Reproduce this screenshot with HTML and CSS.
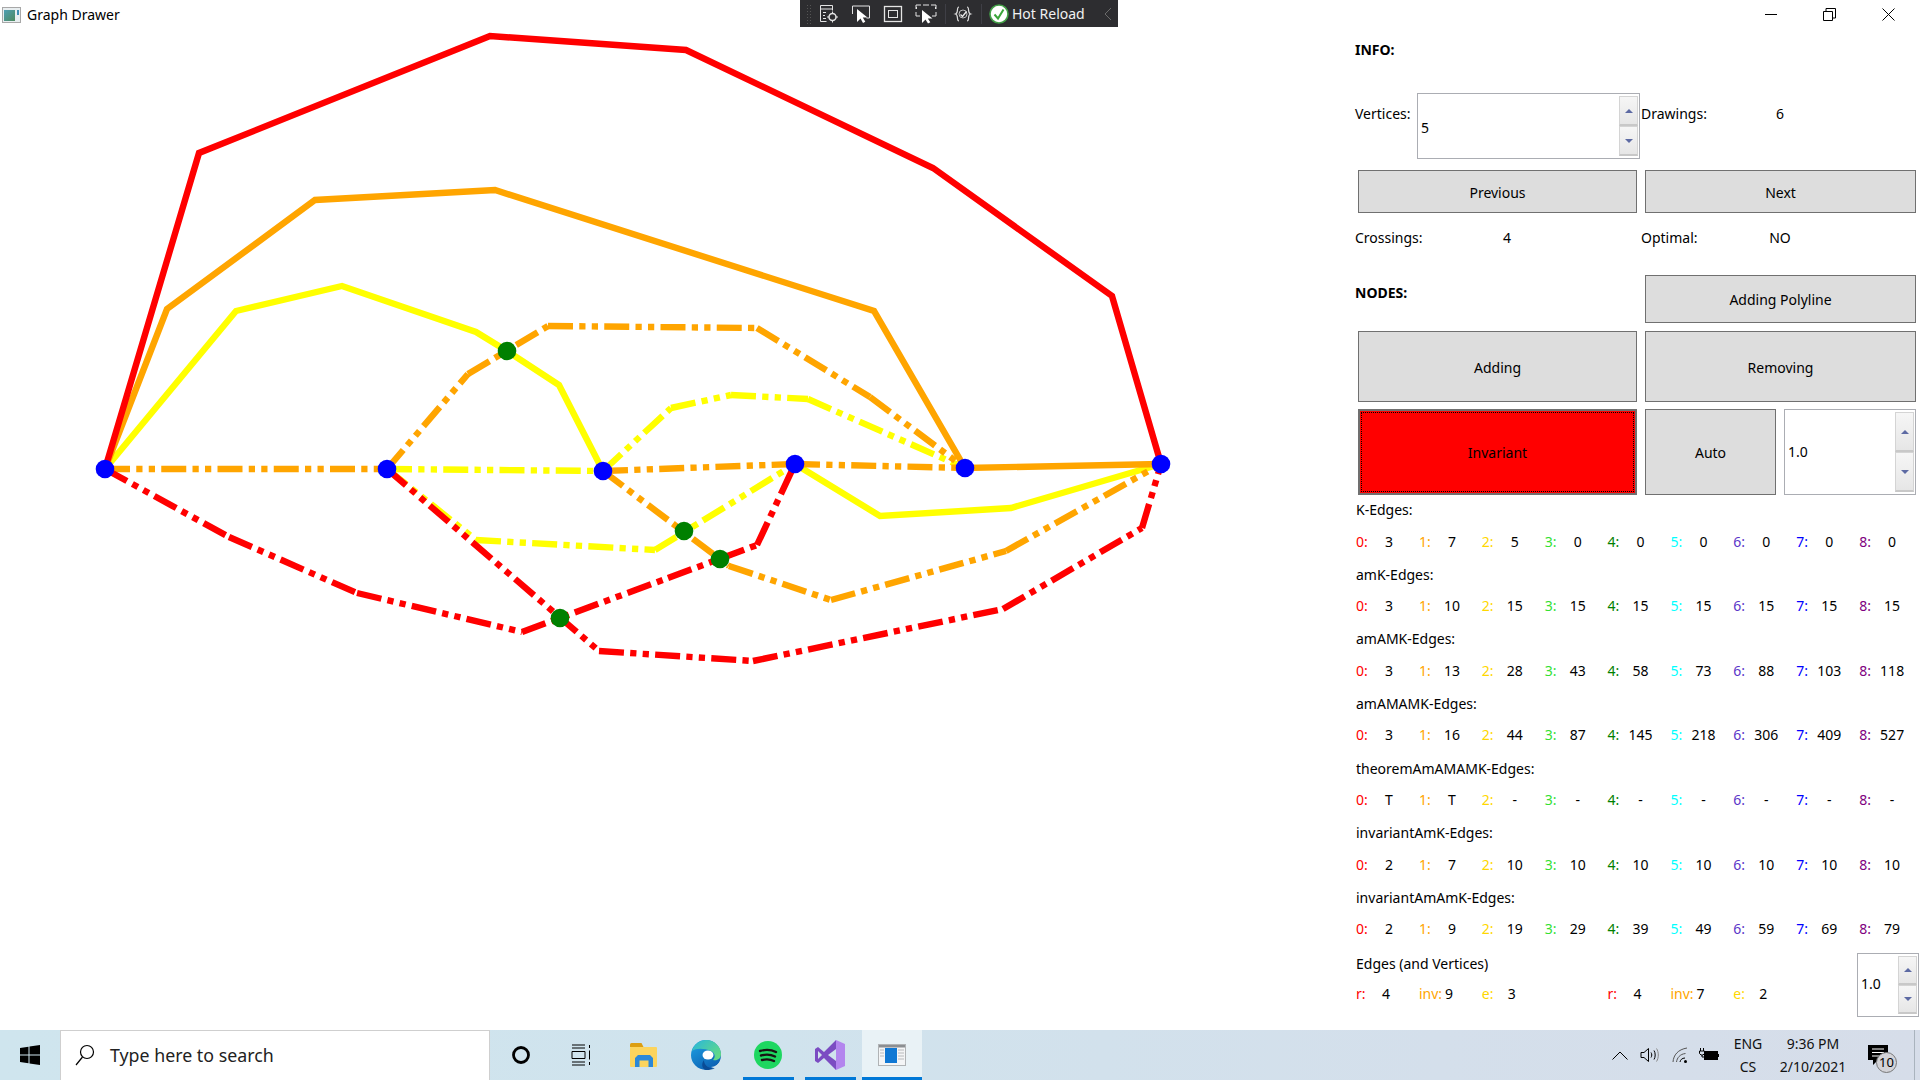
FILE: index.html
```html
<!DOCTYPE html>
<html lang="en">
  <head>
    <meta charset="UTF-8" />
    <title>Graph Drawer</title>
    <link rel="stylesheet" href="styles.css">
  </head>
  <body>
    <div class="window">
      <div class="titlebar">
        <div class="title">
          <svg class="app-icon" width="20" height="16" viewBox="0 0 20 16">
            <defs>
              <linearGradient id="appFill" x1="0" y1="0" x2="1" y2="1">
                <stop offset="0" stop-color="#4f9fb5" />
                <stop offset="1" stop-color="#4d8a5e" />
              </linearGradient>
            </defs>
            <rect x="0.5" y="0.5" width="18" height="15" fill="#e8eef0" stroke="#a8a8a8" />
            <rect x="2" y="3" width="11" height="11" fill="url(#appFill)" />
            <rect x="15" y="3" width="2" height="5" fill="#3f8fb5" />
          </svg>
          <span>Graph Drawer</span>
        </div>
        <div class="window-controls">
          <svg width="12" height="12" viewBox="0 0 12 12"><path d="M0 6.5h12" stroke="#000" fill="none" /></svg>
          <svg width="13" height="13" viewBox="0 0 13 13"><path d="M0.5 3.5h9v9h-9zM3 3.5v-3h9.5v9.500h-3" stroke="#000" fill="none" /></svg>
          <svg width="13" height="13" viewBox="0 0 13 13"><path d="M0.500 0.500l12 12M12.500 0.500l-12 12" stroke="#000" fill="none" /></svg>
        </div>
      </div>

      <!-- runtime toolbar that VS lays over the running app -->
      <div class="hot-toolbar">
        <span class="grip"></span>
        <svg class="tool tool-first" width="20" height="20" viewBox="0 0 20 20">
          <path d="M1.500 1.500h12v5M1.500 1.500v16h6M1.500 5h12M4 8.500h3M4 11.500h2M4 14.500h3" stroke="#e4e4e4" fill="none" />
          <circle cx="13.500" cy="13" r="3.500" stroke="#e4e4e4" stroke-width="1.500" fill="none" />
          <path d="M13.500 7.500v2M13.500 16.500v2M8 13h2M17 13h2" stroke="#e4e4e4" />
        </svg>
        <svg class="tool" width="20" height="20" viewBox="0 0 20 20">
          <path d="M1.500 10v-8h17v12h-3" stroke="#e4e4e4" fill="none" />
          <path d="M6 5v13l3.500-3.500 2.500 4.500 2.300-1.200-2.500-4.300h4.700z" fill="#fff" />
        </svg>
        <svg class="tool" width="20" height="20" viewBox="0 0 20 20">
          <rect x="1.500" y="2.500" width="17" height="15" stroke="#e4e4e4" fill="none" stroke-width="1.300" />
          <rect x="5.500" y="6.500" width="9" height="7" stroke="#e4e4e4" fill="none" />
        </svg>
        <svg class="tool" width="22" height="20" viewBox="0 0 22 20">
          <path d="M1 5v-4h5M16 1h5v4M1 8v4h4M21 8v4h-4M8 1h6M1.500 3v2M20.500 3v2" stroke="#e4e4e4" fill="none" />
          <path d="M7 6v13l3.500-3.500 2.500 4 2.300-1.200-2.500-3.800h4.700z" fill="#fff" />
        </svg>
        <span class="tool-sep"></span>
        <svg class="tool" width="20" height="20" viewBox="0 0 20 20">
          <path d="M6 3c-3 0 0 6-3.500 7 3.500 1 0.500 7 3.500 7M14 3c3 0 0 6 3.500 7-3.500 1-0.500 7-3.500 7" stroke="#dcdcdc" fill="none" stroke-width="1.200" />
          <circle cx="10" cy="10" r="4" stroke="#bbb" fill="none" />
          <path d="M7.500 10.500l2 2 4-5" stroke="#e8e8e8" fill="none" stroke-width="1.400" />
        </svg>
        <span class="tool-sep"></span>
        <svg class="reload-check" width="20" height="20" viewBox="0 0 20 20">
          <circle cx="10" cy="10" r="9" fill="#fff" stroke="#43a047" stroke-width="1.600" />
          <path d="M5.500 10.500l3.500 4 5.500-9" stroke="#3aa53a" stroke-width="2" fill="none" />
        </svg>
        <span class="reload-text">Hot Reload</span>
        <svg class="collapse" width="8" height="14" viewBox="0 0 8 14"><path d="M7 1l-6 6 6 6" stroke="#6b6b6b" fill="none" /></svg>
      </div>

      <div class="content">
        <svg class="canvas" width="1340" height="1000" viewBox="0 30 1340 1000">
          <g class="edges yellow">
            <polyline points="105,469 236,311 342,286 476,332 507,351 559,385 603,471" />
            <polyline points="795,464 880,516 1011,508 1161,464" />
            <line class="dashed" x1="387" y1="469" x2="603" y2="471" />
            <line class="dashed" x1="603" y1="471" x2="671" y2="408" />
            <line class="dashed" x1="671" y1="408" x2="731" y2="395" />
            <line class="dashed" x1="731" y1="395" x2="808" y2="399" />
            <line class="dashed" x1="808" y1="399" x2="965" y2="468" />
            <line class="dashed" x1="387" y1="469" x2="476" y2="540" />
            <line class="dashed" x1="476" y1="540" x2="655" y2="550" />
            <line class="dashed" x1="655" y1="550" x2="795" y2="464" />
          </g>
          <g class="edges orange">
            <polyline points="105,469 167,309 315,200 495,190 874,311 965,468 1161,464" />
            <line class="dashed" x1="105" y1="469" x2="387" y2="469" />
            <line class="dashed" x1="603" y1="471" x2="795" y2="464" />
            <line class="dashed" x1="795" y1="464" x2="965" y2="468" />
            <line class="dashed" x1="387" y1="469" x2="468" y2="374" />
            <line class="dashed" x1="468" y1="374" x2="548" y2="326" />
            <line class="dashed" x1="548" y1="326" x2="757" y2="328" />
            <line class="dashed" x1="757" y1="328" x2="870" y2="397" />
            <line class="dashed" x1="870" y1="397" x2="965" y2="468" />
            <line class="dashed" x1="603" y1="471" x2="729" y2="566" />
            <line class="dashed" x1="729" y1="566" x2="831" y2="600" />
            <line class="dashed" x1="831" y1="600" x2="1006" y2="551" />
            <line class="dashed" x1="1006" y1="551" x2="1161" y2="464" />
          </g>
          <g class="edges red">
            <polyline points="105,469 199,153 490,36 686,50 933,168 1112,296 1161,464" />
            <line class="dashed" x1="105" y1="469" x2="229" y2="537" />
            <line class="dashed" x1="229" y1="537" x2="357" y2="593" />
            <line class="dashed" x1="357" y1="593" x2="522" y2="632" />
            <line class="dashed" x1="522" y1="632" x2="668" y2="578" />
            <line class="dashed" x1="668" y1="578" x2="757" y2="545" />
            <line class="dashed" x1="757" y1="545" x2="795" y2="464" />
            <line class="dashed" x1="387" y1="469" x2="599" y2="651" />
            <line class="dashed" x1="599" y1="651" x2="753" y2="661" />
            <line class="dashed" x1="753" y1="661" x2="1003" y2="609" />
            <line class="dashed" x1="1003" y1="609" x2="1142" y2="528" />
            <line class="dashed" x1="1142" y1="528" x2="1161" y2="464" />
          </g>
          <g fill="#008000">
            <circle cx="507" cy="351" r="9.300" />
            <circle cx="684" cy="531" r="9.300" />
            <circle cx="720" cy="559" r="9.300" />
            <circle cx="560" cy="618" r="9.300" />
          </g>
          <g fill="#0000ff">
            <circle cx="105" cy="469" r="9.300" />
            <circle cx="387" cy="469" r="9.300" />
            <circle cx="603" cy="471" r="9.300" />
            <circle cx="795" cy="464" r="9.300" />
            <circle cx="965" cy="468" r="9.300" />
            <circle cx="1161" cy="464" r="9.300" />
          </g>
        </svg>

        <div class="panel">
          <div class="heading info-heading">INFO:</div>

          <div class="vertices-row">
            <span class="vertices-label">Vertices:</span>
            <div class="spinner vertices-spinner">
              <span class="spinner-value">5</span>
              <div class="spin-buttons">
                <span class="spin-btn"><i class="arrow-up"></i></span>
                <span class="spin-btn"><i class="arrow-down"></i></span>
              </div>
            </div>
            <span class="drawings-label">Drawings:</span>
            <span class="stat-value">6</span>
          </div>

          <div class="button-row prev-row">
            <button class="btn">Previous</button>
            <button class="btn">Next</button>
          </div>

          <div class="stats-row">
            <span class="crossings-label">Crossings:</span>
            <span class="stat-value">4</span>
            <span class="optimal-label">Optimal:</span>
            <span class="stat-value">NO</span>
          </div>

          <div class="button-row nodes-row">
            <div class="heading nodes-heading">NODES:</div>
            <button class="btn">Adding Polyline</button>
          </div>

          <div class="button-row mode-row">
            <button class="btn">Adding</button>
            <button class="btn">Removing</button>
          </div>

          <div class="button-row invariant-row">
            <button class="btn btn-active"><span class="focus-ring">Invariant</span></button>
            <div class="auto-group">
              <button class="btn">Auto</button>
              <div class="spinner">
                <span class="spinner-value">1.0</span>
                <div class="spin-buttons">
                  <span class="spin-btn"><i class="arrow-up"></i></span>
                  <span class="spin-btn"><i class="arrow-down"></i></span>
                </div>
              </div>
            </div>
          </div>

          <div class="group">
            <div class="group-label">K-Edges:</div>
            <div class="counts">
              <div class="cell"><span class="key c0">0:</span><span class="val">3</span></div>
              <div class="cell"><span class="key c1">1:</span><span class="val">7</span></div>
              <div class="cell"><span class="key c2">2:</span><span class="val">5</span></div>
              <div class="cell"><span class="key c3">3:</span><span class="val">0</span></div>
              <div class="cell"><span class="key c4">4:</span><span class="val">0</span></div>
              <div class="cell"><span class="key c5">5:</span><span class="val">0</span></div>
              <div class="cell"><span class="key c6">6:</span><span class="val">0</span></div>
              <div class="cell"><span class="key c7">7:</span><span class="val">0</span></div>
              <div class="cell"><span class="key c8">8:</span><span class="val">0</span></div>
            </div>
          </div>
          <div class="group">
            <div class="group-label">amK-Edges:</div>
            <div class="counts">
              <div class="cell"><span class="key c0">0:</span><span class="val">3</span></div>
              <div class="cell"><span class="key c1">1:</span><span class="val">10</span></div>
              <div class="cell"><span class="key c2">2:</span><span class="val">15</span></div>
              <div class="cell"><span class="key c3">3:</span><span class="val">15</span></div>
              <div class="cell"><span class="key c4">4:</span><span class="val">15</span></div>
              <div class="cell"><span class="key c5">5:</span><span class="val">15</span></div>
              <div class="cell"><span class="key c6">6:</span><span class="val">15</span></div>
              <div class="cell"><span class="key c7">7:</span><span class="val">15</span></div>
              <div class="cell"><span class="key c8">8:</span><span class="val">15</span></div>
            </div>
          </div>
          <div class="group">
            <div class="group-label">amAMK-Edges:</div>
            <div class="counts">
              <div class="cell"><span class="key c0">0:</span><span class="val">3</span></div>
              <div class="cell"><span class="key c1">1:</span><span class="val">13</span></div>
              <div class="cell"><span class="key c2">2:</span><span class="val">28</span></div>
              <div class="cell"><span class="key c3">3:</span><span class="val">43</span></div>
              <div class="cell"><span class="key c4">4:</span><span class="val">58</span></div>
              <div class="cell"><span class="key c5">5:</span><span class="val">73</span></div>
              <div class="cell"><span class="key c6">6:</span><span class="val">88</span></div>
              <div class="cell"><span class="key c7">7:</span><span class="val">103</span></div>
              <div class="cell"><span class="key c8">8:</span><span class="val">118</span></div>
            </div>
          </div>
          <div class="group">
            <div class="group-label">amAMAMK-Edges:</div>
            <div class="counts">
              <div class="cell"><span class="key c0">0:</span><span class="val">3</span></div>
              <div class="cell"><span class="key c1">1:</span><span class="val">16</span></div>
              <div class="cell"><span class="key c2">2:</span><span class="val">44</span></div>
              <div class="cell"><span class="key c3">3:</span><span class="val">87</span></div>
              <div class="cell"><span class="key c4">4:</span><span class="val">145</span></div>
              <div class="cell"><span class="key c5">5:</span><span class="val">218</span></div>
              <div class="cell"><span class="key c6">6:</span><span class="val">306</span></div>
              <div class="cell"><span class="key c7">7:</span><span class="val">409</span></div>
              <div class="cell"><span class="key c8">8:</span><span class="val">527</span></div>
            </div>
          </div>
          <div class="group">
            <div class="group-label">theoremAmAMAMK-Edges:</div>
            <div class="counts">
              <div class="cell"><span class="key c0">0:</span><span class="val">T</span></div>
              <div class="cell"><span class="key c1">1:</span><span class="val">T</span></div>
              <div class="cell"><span class="key c2">2:</span><span class="val">-</span></div>
              <div class="cell"><span class="key c3">3:</span><span class="val">-</span></div>
              <div class="cell"><span class="key c4">4:</span><span class="val">-</span></div>
              <div class="cell"><span class="key c5">5:</span><span class="val">-</span></div>
              <div class="cell"><span class="key c6">6:</span><span class="val">-</span></div>
              <div class="cell"><span class="key c7">7:</span><span class="val">-</span></div>
              <div class="cell"><span class="key c8">8:</span><span class="val">-</span></div>
            </div>
          </div>
          <div class="group">
            <div class="group-label">invariantAmK-Edges:</div>
            <div class="counts">
              <div class="cell"><span class="key c0">0:</span><span class="val">2</span></div>
              <div class="cell"><span class="key c1">1:</span><span class="val">7</span></div>
              <div class="cell"><span class="key c2">2:</span><span class="val">10</span></div>
              <div class="cell"><span class="key c3">3:</span><span class="val">10</span></div>
              <div class="cell"><span class="key c4">4:</span><span class="val">10</span></div>
              <div class="cell"><span class="key c5">5:</span><span class="val">10</span></div>
              <div class="cell"><span class="key c6">6:</span><span class="val">10</span></div>
              <div class="cell"><span class="key c7">7:</span><span class="val">10</span></div>
              <div class="cell"><span class="key c8">8:</span><span class="val">10</span></div>
            </div>
          </div>
          <div class="group">
            <div class="group-label">invariantAmAmK-Edges:</div>
            <div class="counts">
              <div class="cell"><span class="key c0">0:</span><span class="val">2</span></div>
              <div class="cell"><span class="key c1">1:</span><span class="val">9</span></div>
              <div class="cell"><span class="key c2">2:</span><span class="val">19</span></div>
              <div class="cell"><span class="key c3">3:</span><span class="val">29</span></div>
              <div class="cell"><span class="key c4">4:</span><span class="val">39</span></div>
              <div class="cell"><span class="key c5">5:</span><span class="val">49</span></div>
              <div class="cell"><span class="key c6">6:</span><span class="val">59</span></div>
              <div class="cell"><span class="key c7">7:</span><span class="val">69</span></div>
              <div class="cell"><span class="key c8">8:</span><span class="val">79</span></div>
            </div>
          </div>

          <div class="edges-section">
            <div class="edges-info">
              <div class="group-label">Edges (and Vertices)</div>
              <div class="counts edge-counts">
                <div class="cell"><span class="key c0">r:</span><span class="val">4</span></div>
                <div class="cell"><span class="key c1">inv:</span><span class="val">9</span></div>
                <div class="cell"><span class="key c2">e:</span><span class="val">3</span></div>
                <div class="cell cell-skip"><span class="key c0">r:</span><span class="val">4</span></div>
                <div class="cell"><span class="key c1">inv:</span><span class="val">7</span></div>
                <div class="cell"><span class="key c2">e:</span><span class="val">2</span></div>
              </div>
            </div>
            <div class="spinner small-spinner">
              <span class="spinner-value">1.0</span>
              <div class="spin-buttons">
                <span class="spin-btn"><i class="arrow-up"></i></span>
                <span class="spin-btn"><i class="arrow-down"></i></span>
              </div>
            </div>
          </div>
        </div>
      </div>
    </div>

    <div class="taskbar">
      <div class="start">
        <svg width="20" height="20" viewBox="0 0 20 20"><path d="M0 3l8.500-1.200v7.700H0zM9.500 1.600L20 0v9.500H9.500zM0 10.500h8.500v7.700L0 17zM9.500 10.500H20V20L9.500 18.400z" fill="#000" /></svg>
      </div>
      <div class="search">
        <svg width="20" height="22" viewBox="0 0 20 22"><circle cx="12" cy="8" r="6.500" fill="none" stroke="#000" stroke-width="1.200" /><path d="M7.500 13L1 21" stroke="#000" stroke-width="1.200" /></svg>
        <span>Type here to search</span>
      </div>
      <div class="task-items">
        <div class="task-item">
          <svg width="20" height="20" viewBox="0 0 20 20"><circle cx="10" cy="10" r="7.500" fill="none" stroke="#000" stroke-width="2.800" /></svg>
        </div>
        <div class="task-item task-view">
          <svg width="22" height="22" viewBox="0 0 22 22"><path d="M2 1h13M2 21h13M2 7.500h13v7H2zM2 4h13M2 18h13M19.500 1v3M19.500 6.500v9M19.500 18v3" stroke="#000" fill="none" /></svg>
        </div>
        <div class="task-item">
          <svg width="28" height="24" viewBox="0 0 28 24">
            <path d="M0 1.500q0-1.500 1.500-1.500h10l2 4H0z" fill="#dc9e12" />
            <rect x="0" y="4" width="27" height="20" rx="1" fill="#fcd45d" />
            <path d="M5 24v-9l3-3h12l3 3v9h-4.500v-6.500h-9V24z" fill="#2b88d8" />
          </svg>
        </div>
        <div class="task-item">
          <svg width="30" height="30" viewBox="0 0 30 30">
            <defs>
              <linearGradient id="edgeBody" x1="0" y1="0" x2="0.600" y2="1">
                <stop offset="0" stop-color="#1fa4e6" />
                <stop offset="1" stop-color="#0d62b4" />
              </linearGradient>
              <linearGradient id="edgeTop" x1="0" y1="0" x2="1" y2="0.700">
                <stop offset="0" stop-color="#29b6dc" />
                <stop offset="1" stop-color="#62da86" />
              </linearGradient>
            </defs>
            <circle cx="15" cy="15" r="15" fill="url(#edgeBody)" />
            <path d="M13 20c0 5 4 9 11 8-2 1.500-6 2-9 2-4-1-5-6-2-10z" fill="#0a4c96" />
            <ellipse cx="17" cy="15" rx="5.500" ry="4.500" fill="#ffffff" />
            <path d="M1 11C3 4 9 0 15 0c9 0 15 7 15 14 0 5-4 7-8 6 3-3 2-7-2-9-7-3-15-3-19 0z" fill="url(#edgeTop)" />
            <path d="M30 20c-2 4-6 7-10 7 3 1 8 3 10 3z" fill="#d1e3ed" />
          </svg>
        </div>
        <div class="task-item task-running">
          <svg width="28" height="28" viewBox="0 0 28 28">
            <circle cx="14" cy="14" r="14" fill="#1ed760" />
            <path d="M6 10c5-1.500 11-1.500 16 1M7 14.500c4.500-1.200 9.500-1.200 14 1M8 19c4-1 8-1 12 1" stroke="#191414" stroke-width="2.400" fill="none" stroke-linecap="round" />
          </svg>
        </div>
        <div class="task-item task-running">
          <svg width="30" height="30" viewBox="0 0 30 30">
            <path d="M21 0L9 12 3 7 0 9v12l3 2 6-5 12 12V21l-8-6 8-6z" fill="#7b4cc2" />
            <path d="M3 11l4 4-4 4z" fill="#d3e3ec" />
            <path d="M21 0l9 4v22l-9 4z" fill="#b385ee" />
          </svg>
        </div>
        <div class="task-item task-running task-active">
          <svg width="28" height="22" viewBox="0 0 28 22">
            <rect x="0.500" y="0.500" width="27" height="21" fill="#f4f5f6" stroke="#b0b3b5" />
            <rect x="1" y="1" width="26" height="2.500" fill="#8c8f92" />
            <rect x="7" y="4" width="12" height="15" fill="#0f78d4" />
            <path d="M2 6h4M2 9h4M2 12h4M20 6h6M20 9h6M20 12h6M20 15h6" stroke="#b8babc" />
          </svg>
        </div>
      </div>

      <div class="tray">
        <svg class="tray-icon" width="16" height="9" viewBox="0 0 16 9"><path d="M0.500 8.500L8 1l7.500 7.500" stroke="#000" fill="none" /></svg>
        <svg class="tray-icon" width="20" height="16" viewBox="0 0 20 16"><path d="M1 5.500h3L8.500 1.500v13L4 10.500H1zM11 5.500c1 1.500 1 3.500 0 5M14 3.500c1.600 2.500 1.600 6.500 0 9" stroke="#000" fill="none" /><path d="M16.500 1.500c2.400 3.500 2.400 9.500 0 13" stroke="#888" fill="none" /></svg>
        <svg class="tray-icon" width="16" height="16" viewBox="0 0 16 16"><path d="M1 15C1.500 8 6 2.500 15 1M4.500 15c.5-4 3.500-8 9-8.500" stroke="#555" fill="none" /><path d="M8 15c.3-2 2-4 5-4" stroke="#000" fill="none" /><circle cx="13.500" cy="14.500" r="1.500" fill="#000" /></svg>
        <svg class="tray-icon" width="20" height="14" viewBox="0 0 20 14"><path d="M1.500 0v3M4.500 0v3M0.500 3h5v2.500l-1.500 1.500h-2L0.500 5.500zM3 7v2h3" stroke="#000" fill="none" /><rect x="5.500" y="3.500" width="13" height="8" fill="#000" stroke="#000" /><rect x="18.500" y="6" width="1.500" height="3" fill="#000" /></svg>
        <div class="tray-text lang"><span>ENG</span><span>CS</span></div>
        <div class="tray-text clock"><span>9:36 PM</span><span>2/10/2021</span></div>
        <div class="notify">
          <svg width="20" height="20" viewBox="0 0 20 20"><path d="M0 0h20v15H10l-5 5v-5H0z" fill="#000" /><path d="M4 4h12M4 7.500h12M4 11h12" stroke="#fff" /></svg>
          <span class="notify-count">10</span>
        </div>
        <span class="show-desktop"></span>
      </div>
    </div>
  </body>
</html>
```

FILE: styles.css
```css
* {
  box-sizing: border-box;
}

html,
body {
  height: 100%;
}

body {
  margin: 0;
  display: flex;
  flex-direction: column;
  overflow: hidden;
  background-color: #fff;
  color: #000;
  font-family: "Noto Sans", "Open Sans", Arial, sans-serif;
  font-size: 14px;
}

/* window */

.window {
  position: relative;
  height: 1030px;
  display: flex;
  flex-direction: column;
}

.titlebar {
  height: 30px;
  display: flex;
  justify-content: space-between;
}

.title {
  display: flex;
  align-items: center;
  height: 29px;
  padding-left: 2px;
}

.title span {
  margin-left: 5px;
}

.window-controls {
  display: flex;
  align-items: flex-start;
  padding: 8px 25px 0 0;
  gap: 46px;
}

.hot-toolbar {
  position: absolute;
  top: 0;
  left: 800px;
  width: 318px;
  height: 27px;
  display: flex;
  align-items: center;
  padding-left: 6px;
  background-color: #2d2d30;
  color: #f1f1f1;
}

.grip {
  width: 6px;
  height: 20px;
  background-image: radial-gradient(#555 1px, transparent 1px);
  background-size: 3px 3px;
}

.tool {
  margin-left: 12px;
}

.tool-first {
  margin-left: 7px;
}

.tool-sep {
  width: 1px;
  height: 20px;
  margin-left: 8px;
  margin-right: -5px;
  background-color: #3f3f46;
}

.reload-check {
  margin-left: 12px;
}

.reload-text {
  margin-left: 3px;
}

.collapse {
  margin-left: 19px;
}

.content {
  flex: 1;
  display: flex;
}

.canvas {
  display: block;
  flex: none;
}

/* graph */

.edges polyline,
.edges line {
  fill: none;
  stroke-width: 6.4;
}

.edges .dashed {
  stroke-dasharray: 25 6.25 6.25 6.25 6.25 6.25;
}

.yellow {
  stroke: #ffff00;
}

.orange {
  stroke: #ffa500;
}

.red {
  stroke: #ff0000;
}

/* side panel */

.panel {
  width: 580px;
  padding-left: 15px;
}

.heading {
  font-weight: 700;
}

.info-heading {
  height: 39px;
  line-height: 39px;
}

.vertices-row {
  display: flex;
  align-items: flex-start;
  margin-top: 24px;
  height: 66px;
  line-height: 42px;
}

.vertices-label {
  width: 62px;
}

.vertices-spinner {
  width: 223px;
  height: 66px;
}

.drawings-label {
  width: 125px;
  padding-left: 1px;
}

.stat-value {
  width: 30px;
  text-align: center;
}

.spinner {
  display: flex;
  align-items: center;
  justify-content: space-between;
  border: 1px solid #abadb3;
  padding: 2px 1px 2px 3px;
  background-color: #fff;
  line-height: 1.2;
}

.vertices-spinner .spinner-value {
  margin-top: 4px;
}

.spin-buttons {
  width: 19px;
  height: 100%;
  display: flex;
  flex-direction: column;
}

.spin-btn {
  flex: 1;
  display: flex;
  align-items: center;
  justify-content: center;
  border: 1px solid #d4d4d4;
  border-bottom: 2px solid #c8c8c8;
  background: linear-gradient(#f6f6f6, #e6e6e6);
}

.arrow-up,
.arrow-down {
  width: 0;
  height: 0;
  border-left: 4px solid transparent;
  border-right: 4px solid transparent;
}

.arrow-up {
  border-bottom: 4px solid #5d6aa3;
}

.arrow-down {
  border-top: 4px solid #5d6aa3;
}

.button-row {
  display: grid;
  grid-template-columns: 279px 271px;
  column-gap: 8px;
  margin-left: 3px;
}

.btn {
  padding: 1px 0 0;
  border: 1px solid #707070;
  background-color: #dddddd;
  color: #000;
  font: inherit;
}

.btn-active {
  border-width: 2px;
  padding: 1px;
  background-color: #ff0000;
}

.focus-ring {
  display: flex;
  align-items: center;
  justify-content: center;
  height: 100%;
  border: 1px dotted #000;
}

.prev-row {
  height: 43px;
  margin-top: 11px;
}

.stats-row {
  display: flex;
  height: 30px;
  margin-top: 10px;
  line-height: 30px;
}

.crossings-label {
  width: 137px;
}

.optimal-label {
  width: 124px;
  margin-left: 119px;
}

.nodes-row {
  height: 48px;
  margin-top: 22px;
}

.nodes-heading {
  margin-left: -3px;
  line-height: 36px;
}

.mode-row {
  height: 71px;
  margin-top: 8px;
}

.invariant-row {
  height: 86px;
  margin-top: 7px;
}

.auto-group {
  display: grid;
  grid-template-columns: 131px 132px;
  column-gap: 8px;
}

.group {
  height: 64.67px;
  padding-left: 1px;
}

.group-label {
  height: 31.5px;
  line-height: 30px;
}

.counts {
  display: grid;
  grid-template-columns: repeat(9, 62.9px);
  line-height: 29.5px;
}

.cell {
  display: flex;
}

.key {
  flex: none;
  width: 18px;
}

.val {
  flex: none;
  width: 30px;
  text-align: center;
}

.c0 { color: #ff0000; }
.c1 { color: #ffa500; }
.c2 { color: #ffd700; }
.c3 { color: #32e032; }
.c4 { color: #008000; }
.c5 { color: #00ffff; }
.c6 { color: #5a35c8; }
.c7 { color: #0000ff; }
.c8 { color: #800080; }

.edges-section {
  display: flex;
  justify-content: space-between;
  margin-top: 1px;
  padding-left: 1px;
}

.edges-info {
  width: 501px;
}

.edge-counts {
  grid-template-columns: repeat(8, 62.9px);
  line-height: 28px;
}

.edge-counts .key {
  width: 15px;
}

.cell-skip {
  grid-column: 5;
}

.small-spinner {
  width: 62px;
  height: 64px;
  margin: 4px 1px 0 0;
}

/* taskbar */

.taskbar {
  height: 50px;
  display: flex;
  background: linear-gradient(90deg, #cfe5ee, #d0e3ed 40%, #d4dfeb 75%, #d6dde9);
}

.start {
  width: 60px;
  display: flex;
  align-items: center;
  justify-content: center;
}

.search {
  width: 430px;
  display: flex;
  align-items: center;
  padding: 0 0 1px 14px;
  border: 1px solid #cfcfcf;
  border-bottom: none;
  background-color: #fff;
  color: #222;
  font-size: 17.8px;
}

.search span {
  margin-left: 15px;
  margin-bottom: 1px;
}

.task-items {
  display: flex;
}

.task-item {
  width: 62px;
  display: flex;
  align-items: center;
  justify-content: center;
}

.task-item:first-child {
  width: 61px;
}

.task-view svg {
  margin-right: 3px;
}

.task-running {
  background: linear-gradient(#0078d7, #0078d7) center bottom / 51px 3px no-repeat;
}

.task-active {
  width: 60px;
  margin-left: 1px;
  background: linear-gradient(#0078d7, #0078d7) center bottom / 100% 3px no-repeat, #e9f2f6;
}

.tray {
  flex: 1;
  position: relative;
  display: flex;
  align-items: center;
  justify-content: flex-end;
  padding-right: 6px;
}

.tray-icon {
  flex: none;
}

.tray-icon:nth-child(1) {
  margin-right: 12px;
}

.tray-icon:nth-child(2) {
  margin-right: 12px;
}

.tray-icon:nth-child(3) {
  margin-right: 11px;
}

.tray-text {
  display: flex;
  flex-direction: column;
  align-items: center;
  line-height: 23px;
  color: #111;
}

.lang {
  margin-left: 11px;
  width: 36px;
}

.clock {
  margin-left: 12px;
  width: 70px;
}

.notify {
  position: relative;
  margin-left: 20px;
  margin-right: 26px;
  width: 20px;
  height: 20px;
}

.notify svg {
  display: block;
}

.notify-count {
  position: absolute;
  left: 8px;
  top: 7px;
  width: 21px;
  height: 21px;
  border: 1.500px solid #777;
  border-radius: 50%;
  background-color: #d3d3d8;
  text-align: center;
  font-size: 13px;
  line-height: 18px;
}

.show-desktop {
  position: absolute;
  right: 5px;
  top: 0;
  bottom: 0;
  width: 1px;
  background-color: #a9b3bd;
}
```
